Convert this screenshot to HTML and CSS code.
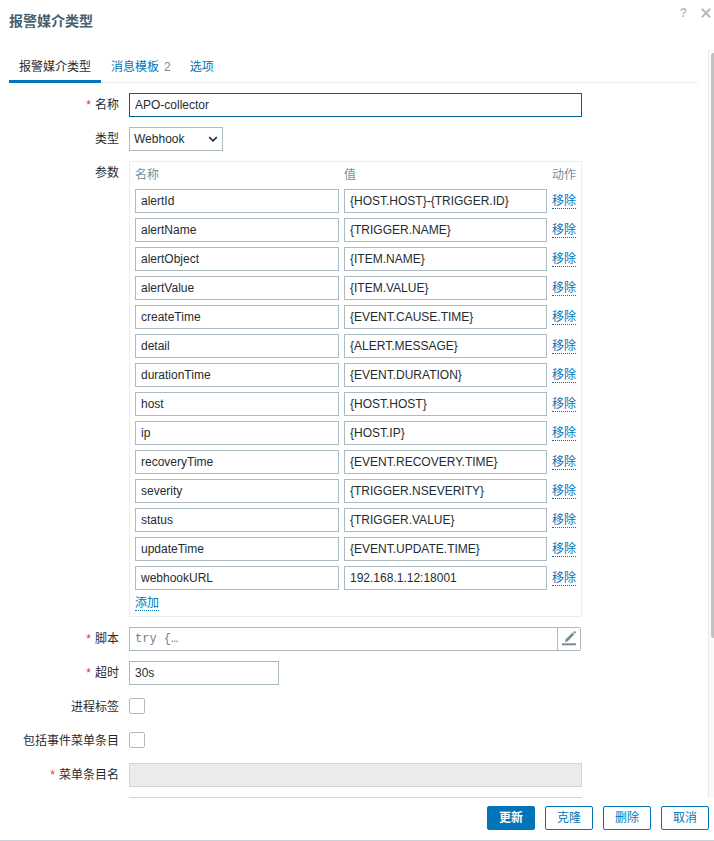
FILE: index.html
```html
<!DOCTYPE html>
<html lang="zh-CN">
<head>
<meta charset="utf-8">
<title>报警媒介类型</title>
<link rel="stylesheet" href="styles.css">
</head>
<body>
<div class="dialog">
  <header class="head">
    <h4>报警媒介类型</h4>
    <div class="tools"><span class="help">?</span>
      <svg width="10" height="10" viewBox="0 0 10 10"><path d="M.8.8l8.4 8.4M9.2.8L.8 9.2" stroke="#b0bec7" stroke-width="2" fill="none"/></svg>
    </div>
  </header>
  <main class="body">
    <div class="content">
      <nav class="tabs">
        <a class="tab active">报警媒介类型</a>
        <a class="tab">消息模板<span class="count">2</span></a>
        <a class="tab">选项</a>
      </nav>
      <div class="form">
        <label class="req">名称</label><div class="input focus">APO-collector</div>
        <label>类型</label>
        <div class="input select">Webhook<svg width="10" height="7" viewBox="0 0 10 7"><path d="M1.2 1.2L5 4.8l3.8-3.6" stroke="#1f2c33" stroke-width="1.6" fill="none"/></svg></div>
        <label>参数</label>
        <div class="params">
          <span class="th">名称</span><span class="th">值</span><span class="th">动作</span>
          <div class="input">alertId</div><div class="input">{HOST.HOST}-{TRIGGER.ID}</div><a class="link">移除</a>
          <div class="input">alertName</div><div class="input">{TRIGGER.NAME}</div><a class="link">移除</a>
          <div class="input">alertObject</div><div class="input">{ITEM.NAME}</div><a class="link">移除</a>
          <div class="input">alertValue</div><div class="input">{ITEM.VALUE}</div><a class="link">移除</a>
          <div class="input">createTime</div><div class="input">{EVENT.CAUSE.TIME}</div><a class="link">移除</a>
          <div class="input">detail</div><div class="input">{ALERT.MESSAGE}</div><a class="link">移除</a>
          <div class="input">durationTime</div><div class="input">{EVENT.DURATION}</div><a class="link">移除</a>
          <div class="input">host</div><div class="input">{HOST.HOST}</div><a class="link">移除</a>
          <div class="input">ip</div><div class="input">{HOST.IP}</div><a class="link">移除</a>
          <div class="input">recoveryTime</div><div class="input">{EVENT.RECOVERY.TIME}</div><a class="link">移除</a>
          <div class="input">severity</div><div class="input">{TRIGGER.NSEVERITY}</div><a class="link">移除</a>
          <div class="input">status</div><div class="input">{TRIGGER.VALUE}</div><a class="link">移除</a>
          <div class="input">updateTime</div><div class="input">{EVENT.UPDATE.TIME}</div><a class="link">移除</a>
          <div class="input">webhookURL</div><div class="input">192.168.1.12:18001</div><a class="link">移除</a>
          <a class="link add">添加</a>
        </div>
        <label class="req">脚本</label>
        <div class="script"><div class="input code">try {…</div><div class="edit">
          <svg width="14" height="15" viewBox="0 0 14 15"><path d="M0 12.3h14v2H0z" fill="#768d99"/><path d="M2.8 11.2l1-3L10.4 1.6l1.9 1.9-6.6 6.7z" fill="#768d99"/><path d="M11.2 1.2L12.2.2q.5-.3.9 0l.7.7q.3.5 0 .9l-1 1z" fill="#768d99"/></svg>
        </div></div>
        <label class="req">超时</label><div class="input short">30s</div>
        <label>进程标签</label><div class="check"></div>
        <label>包括事件菜单条目</label><div class="check"></div>
        <label class="req">菜单条目名</label><div class="input disabled"></div>
        <label></label><div class="input disabled"></div>
      </div>
    </div>
    <div class="scroll"><div class="thumb"></div></div>
  </main>
  <footer class="foot">
    <button class="primary">更新</button><button>克隆</button><button>删除</button><button>取消</button>
  </footer>
</div>
</body>
</html>
```
FILE: styles.css
```css
* { box-sizing: border-box; }
body {
  margin: 0;
  background: #fff;
  color: #1f2c33;
  font: 12px/24px "Liberation Sans", "Noto Sans CJK SC", sans-serif;
}
.dialog {
  height: 841px;
  display: flex;
  flex-direction: column;
  border-bottom: 1px solid #c7d2d8;
  overflow: hidden;
}
.head {
  height: 50px;
  flex: none;
  display: flex;
  justify-content: space-between;
  padding: 8px 3px 0 9px;
}
.head h4 { margin: 1px 0 0; font-size: 14px; font-weight: 700; color: #465f6d; }
.tools { display: flex; gap: 14px; height: 10px; align-items: center; color: #b0bec7; }
.help { font-size: 12px; font-weight: 700; }
.body { height: 748px; flex: none; display: flex; overflow: hidden; }
.content { width: 708px; flex: none; padding: 0 10px 0 9px; }
.tabs { display: flex; height: 33px; border-bottom: 1px solid #ebeef0; }
.tab { height: 33px; padding: 5px 10px 0; color: #0275b8; white-space: nowrap; }
.tab.active { color: #1f2c33; border-bottom: 3px solid #0275b8; }
.count { margin: 0 -1px 0 5px; color: #768d99; }
.form {
  display: grid;
  grid-template-columns: 110px 453px;
  column-gap: 10px;
  row-gap: 10px;
  padding-top: 10px;
}
.form > label { text-align: right; height: 24px; }
.req::before { content: "*"; color: #e33734; margin-right: 4px; }
.input {
  height: 24px;
  border: 1px solid #acbbc2;
  padding: 0 5px;
  line-height: 22px;
  white-space: nowrap;
}
.focus { border-color: #035d93; }
.select {
  width: 94px;
  padding: 0 4px;
  display: flex;
  justify-content: space-between;
  align-items: center;
}
.params {
  height: 456px;
  border: 1px solid #ebeef0;
  padding: 0 5px;
  display: grid;
  grid-template-columns: 204px 203px 24px;
  grid-template-rows: 22px repeat(14, 24px) 20px;
  gap: 5px;
  align-content: start;
}
.th { color: #768d99; line-height: 26px; }
.link {
  justify-self: start;
  align-self: start;
  margin-top: 3px;
  height: 17px;
  line-height: 19px;
  color: #0275b8;
  border-bottom: 1px dotted #0275b8;
}
.link.add { margin-top: 0; height: 16px; line-height: 17px; }
.script { display: flex; width: 452px; }
.code { width: 429px; font-family: "Liberation Mono", monospace; color: #768087; }
.edit {
  width: 23px;
  height: 24px;
  border: 1px solid #acbbc2;
  border-left: 0;
  border-radius: 0 2px 2px 0;
  display: flex;
  justify-content: center;
  padding-top: 3px;
}
.short { width: 150px; }
.check {
  width: 16px;
  height: 16px;
  margin: 3px 0 5px;
  border: 1px solid #acbbc2;
  border-radius: 2px;
}
.disabled { background: #ebebeb; border-color: #ccd5d9; }
.scroll { width: 6px; flex: none; background: #fafafa; border-left: 1px solid #e8e8e8; padding: 3px 0 0 2px; }
.thumb { height: 585px; background: #c1c1c1; border-radius: 4px 0 0 4px; }
.foot { display: flex; justify-content: flex-end; gap: 10px; padding: 8px 5px 0 0; }
.foot button {
  width: 48px;
  height: 24px;
  padding: 0;
  font: inherit;
  line-height: 22px;
  color: #0275b8;
  background: #fff;
  border: 1px solid #0275b8;
  border-radius: 2px;
}
.foot .primary { background: #0275b8; color: #fff; font-weight: 700; }
```
